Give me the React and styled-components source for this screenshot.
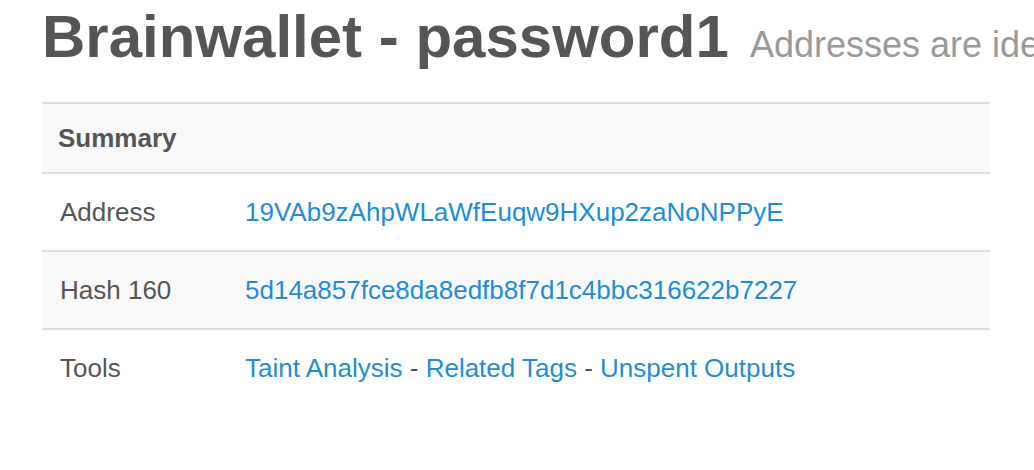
import styled, { createGlobalStyle } from "styled-components";

const GlobalStyle = createGlobalStyle`
  html, body {
    margin: 0;
    padding: 0;
    background: #fff;
    overflow: hidden;
  }
  body {
    font-family: "Liberation Sans", Arial, Helvetica, sans-serif;
    color: #555;
  }
`;

const rows = [
  { label: "Address", links: ["19VAb9zAhpWLaWfEuqw9HXup2zaNoNPPyE"] },
  { label: "Hash 160", links: ["5d14a857fce8da8edfb8f7d1c4bbc316622b7227"] },
  {
    label: "Tools",
    links: ["Taint Analysis", "Related Tags", "Unspent Outputs"],
  },
];

const App = () => {
  return (
    <>
      <GlobalStyle />
      <Page>
        <Title>
          Brainwallet - password1
          <Subtitle>Addresses are identified by a passphrase</Subtitle>
        </Title>

        <SummaryTable>
          <colgroup>
            <col style={{ width: "185px" }} />
            <col />
          </colgroup>
          <thead>
            <tr>
              <HeadCell colSpan={2}>Summary</HeadCell>
            </tr>
          </thead>
          <tbody>
            {rows.map((row, i) => (
              <Row key={row.label} $striped={i % 2 === 1}>
                <Cell>{row.label}</Cell>
                <Cell>
                  {row.links.map((link, j) => (
                    <span key={link}>
                      {j > 0 && " - "}
                      <Link href="#">{link}</Link>
                    </span>
                  ))}
                </Cell>
              </Row>
            ))}
          </tbody>
        </SummaryTable>
      </Page>
    </>
  );
};

export default App;

const Page = styled.main`
  padding: 4px 44px 0 42px;
  width: 948px;
`;

const Title = styled.h1`
  margin: 0;
  font-size: 60px;
  line-height: 66px;
  font-weight: 700;
  color: #555;
  white-space: nowrap;
  overflow: hidden;
  width: 992px;
`;

const Subtitle = styled.small`
  margin-left: 21px;
  font-size: 36px;
  font-weight: 400;
  color: #999;
`;

const SummaryTable = styled.table`
  width: 948px;
  margin-top: 24px;
  border-collapse: collapse;
  table-layout: fixed;
  font-size: 26px;
  line-height: 36px;
`;

const HeadCell = styled.th`
  text-align: left;
  padding: 16px 16px;
  font-weight: 700;
  background: #f9f9f9;
  border-top: 2px solid #ddd;
  border-bottom: 2px solid #ddd;
`;

const Row = styled.tr`
  background: ${({ $striped }) => ($striped ? "#f9f9f9" : "#fff")};

  & + & {
    border-top: 2px solid #ddd;
  }
`;

const Cell = styled.td`
  padding: 20px 18px;
  white-space: nowrap;
`;

const Link = styled.a`
  color: #1f8dd6;
  text-decoration: none;
`;
